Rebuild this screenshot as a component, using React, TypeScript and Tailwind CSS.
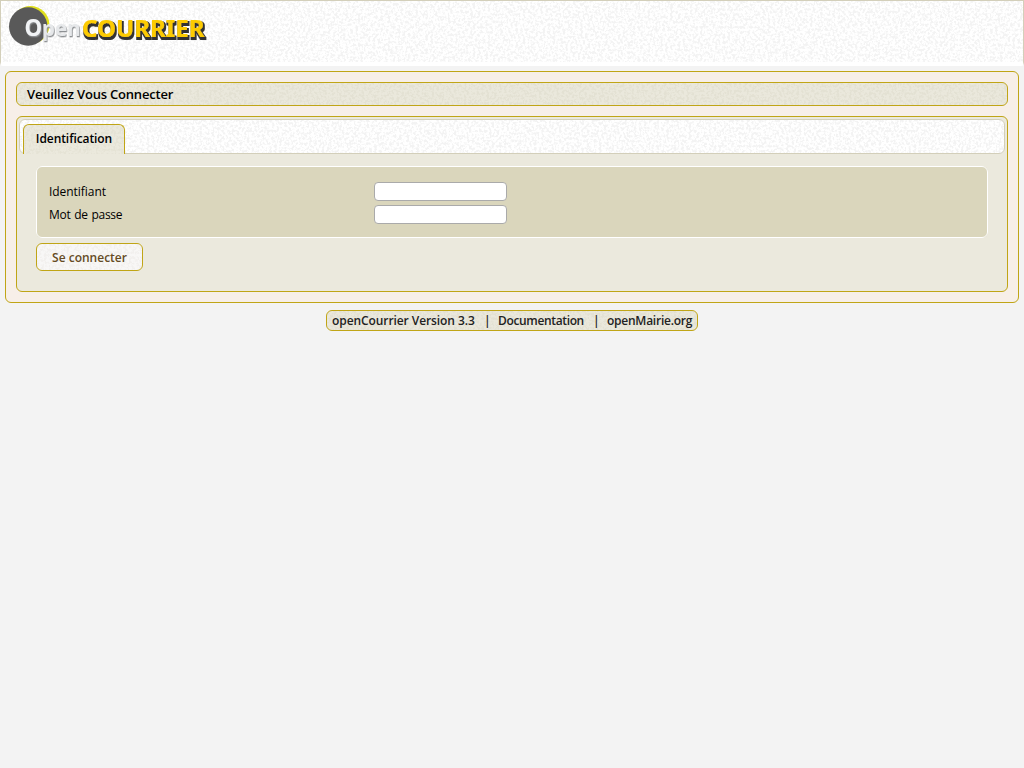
import type { ReactNode } from "react";

function Grain({ id, color, opacity }: { id: string; color: string; opacity: number }) {
  return (
    <svg className="pointer-events-none absolute inset-0 h-full w-full" aria-hidden="true">
      <filter id={id} x="0" y="0" width="100%" height="100%">
        <feTurbulence type="fractalNoise" baseFrequency="0.4" numOctaves="3" seed="9" stitchTiles="stitch" />
        <feColorMatrix type="matrix" values="0 0 0 0 0  0 0 0 0 0  0 0 0 0 0  0 0 0 5 -2.2" result="n" />
        <feFlood floodColor={color} floodOpacity={opacity} />
        <feComposite operator="in" in2="n" />
      </filter>
      <rect width="100%" height="100%" filter={`url(#${id})`} />
    </svg>
  );
}

function Logo() {
  return (
    <svg className="relative block" width="215" height="56" viewBox="1 1 215 56">
      <filter id="logo-grey" x="-10%" y="-20%" width="125%" height="150%">
        <feDropShadow dx="0.8" dy="1.3" stdDeviation="0.7" floodColor="#8d9093" floodOpacity="1" />
      </filter>
      <filter id="logo-dark" x="-5%" y="-20%" width="110%" height="150%">
        <feMorphology in="SourceAlpha" operator="dilate" radius="0.5" result="d" />
        <feOffset in="d" dx="0.5" dy="1.5" result="o" />
        <feFlood floodColor="#333333" />
        <feComposite operator="in" in2="o" result="s" />
        <feMerge>
          <feMergeNode in="s" />
          <feMergeNode in="SourceGraphic" />
        </feMerge>
      </filter>
      <circle cx="30.5" cy="25" r="19" fill="#dfdf1c" />
      <circle cx="28.2" cy="26.5" r="19.2" fill="#595959" />
      <g fontWeight="bold" strokeLinejoin="round">
        <text x="24.5" y="36" fontSize="24" textLength="56" lengthAdjust="spacingAndGlyphs" fontFamily="'Noto Sans', sans-serif" fill="#f1f3f5" filter="url(#logo-grey)">
          O<tspan fontSize="22" fill="#e6e8ea">pen</tspan>
        </text>
        <text x="82" y="36.5" fontSize="23.5" textLength="122.5" lengthAdjust="spacingAndGlyphs" fontFamily="'Noto Sans', sans-serif" fill="#fccb00" stroke="#fccb00" strokeWidth="0.2" filter="url(#logo-dark)">COURRIER</text>
      </g>
    </svg>
  );
}

function Field({ label, type, spacing }: { label: string; type: string; spacing: string }) {
  return (
    <label className="flex h-[23px] items-center text-[12px] text-black">
      <span className={`w-[325px] ${spacing}`}>{label}</span>
      <input type={type} className="h-[19px] w-[133px] rounded-[4px] border border-[#aaaaaa] bg-white px-1 outline-none" />
    </label>
  );
}

function FooterItem({ children, className }: { children: ReactNode; className: string }) {
  return <a className={`block whitespace-nowrap ${className}`}>{children}</a>;
}

export default function App() {
  return (
    <div className="min-h-screen bg-[#f3f3f3] font-['Open_Sans','Noto_Sans',sans-serif] text-[12px] text-[#222]">
      <header className="relative h-[66px] overflow-hidden rounded-b-[3px] border-x border-t border-[#d3cfba] border-b-4 border-b-white bg-white">
        <Grain id="grain-header" color="#dddddd" opacity={0.35} />
        <Logo />
      </header>
      <main className="mx-[5px] mt-[5px] h-[232px] rounded-[6px] border border-[#c0a516] bg-[#f7efe8] p-[10px]">
        <h1 className="relative flex h-6 items-center overflow-hidden rounded-[6px] border border-[#c0a516] bg-[#eae8dc] px-[10px] pt-[2px] text-[13px] font-semibold text-black">
          <Grain id="grain-title" color="#d3d0bd" opacity={0.3} />
          <span className="relative tracking-[-0.2px]">Veuillez Vous Connecter</span>
        </h1>
        <section className="mt-[10px] h-[176px] rounded-[6px] border border-[#c0a516] bg-[#ebe9dd] p-[2px]">
          <nav className="relative h-[35px] rounded-[6px] border border-[#d3cfba] bg-white pl-[3px] pt-[4px]">
            <Grain id="grain-tabs" color="#dddddd" opacity={0.35} />
            <a className="relative flex h-[30px] w-[102px] items-center justify-center overflow-hidden rounded-t-[6px] border-x border-t border-[#c0a516] bg-[#ebe9dd] pb-px font-semibold text-black">
              <Grain id="grain-tab" color="#d3d0bd" opacity={0.25} />
              <span className="relative tracking-[-0.08px]">Identification</span>
            </a>
          </nav>
          <form className="px-[17px] pt-3">
            <fieldset className="h-[72px] rounded-[6px] border border-white bg-[#dad6bc] px-3 pt-[13px]">
              <Field label="Identifiant" type="text" spacing="tracking-[-0.05px]" />
              <Field label="Mot de passe" type="password" spacing="tracking-[-0.3px] [word-spacing:1px]" />
            </fieldset>
            <button type="button" className="relative mt-[5px] flex h-7 w-[107px] items-center justify-center overflow-hidden rounded-[6px] border border-[#c0a516] bg-[#f8f7f6] pt-[2px] font-semibold text-[#654b24]">
              <Grain id="grain-button" color="#e7e2df" opacity={0.35} />
              <span className="relative">Se connecter</span>
            </button>
          </form>
        </section>
      </main>
      <footer className="relative mx-auto mt-[7px] flex h-[21px] w-[372px] items-center overflow-hidden rounded-[6px] border border-[#c0a516] bg-[#eae8dc] pl-[5px] font-semibold">
        <Grain id="grain-footer" color="#d3d0bd" opacity={0.3} />
        <div className="relative flex items-center">
          <FooterItem className="w-[152px] tracking-[-0.08px]">openCourrier Version 3.3</FooterItem>
          <span className="w-[14px]">|</span>
          <FooterItem className="w-[95px] tracking-[-0.35px]">Documentation</FooterItem>
          <span className="w-[14px]">|</span>
          <FooterItem className="w-[88px] tracking-[-0.25px]">openMairie.org</FooterItem>
        </div>
      </footer>
    </div>
  );
}
